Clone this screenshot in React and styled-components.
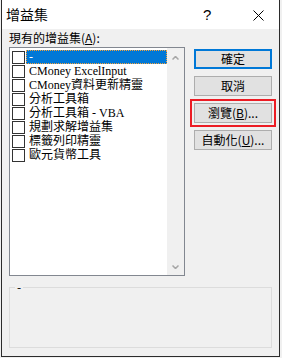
import React, { useState } from 'react';
import styled, { createGlobalStyle } from 'styled-components';

const GlobalStyle = createGlobalStyle`
    html, body {
        margin: 0;
        padding: 0;
        background: #f0f0f0;
    }
    body {
        font-family: "Noto Sans CJK TC", "Liberation Sans", sans-serif;
        font-size: 12px;
        color: #000;
    }
`;

const Window = styled.div`
    margin-left: 1px;
    width: 279px;
    height: 357px;
    box-sizing: border-box;
    border: 1px solid #2b2b2b;
    border-top: none;
    background: #f0f0f0;
    display: flex;
    flex-direction: column;
`;

const TitleBar = styled.div`
    height: 29px;
    background: #fff;
    display: flex;
    align-items: center;
    padding-left: 4px;
    .title {
        flex: 1;
        font-size: 14px;
        line-height: 14px;
        margin-top: -1px;
    }
    .help {
        width: 20px;
        font-family: "Liberation Sans", sans-serif;
        font-size: 15px;
        margin-right: 30px;
        margin-top: -1px;
    }
    .close {
        width: 11px;
        height: 11px;
        margin-right: 15px;
        margin-top: 1px;
    }
`;

const Body = styled.div`
    flex: 1;
    padding: 0 7px;
    display: flex;
    flex-direction: column;
`;

const TopRow = styled.div`
    display: flex;
    gap: 9px;
`;

const LeftCol = styled.div`
    width: 176px;
    display: flex;
    flex-direction: column;
`;

const Label = styled.div`
    height: 14px;
    line-height: 14px;
    margin-top: 2px;
    margin-bottom: 2px;
    u { text-decoration-thickness: 1px; }
`;

const ListBox = styled.div`
    height: 229px;
    box-sizing: border-box;
    border: 1px solid #828790;
    background: #fff;
    display: flex;
`;

const Items = styled.ul`
    flex: 1;
    list-style: none;
    margin: 0;
    padding: 2px 0 0 2px;
`;

const Row = styled.li`
    height: 14px;
    display: flex;
    align-items: center;
    gap: 1px;
`;

const Check = styled.span`
    width: 13px;
    height: 13px;
    box-sizing: border-box;
    border: 1px solid #333;
    background: #fff;
    flex: none;
`;

const ItemText = styled.span`
    flex: 1;
    height: 14px;
    box-sizing: border-box;
    padding-left: 2px;
    line-height: 13px;
    white-space: nowrap;
    font-family: "Liberation Serif", "Noto Sans CJK TC", serif;
    font-size: 12px;
    background: ${p => (p.$selected ? '#0078d7' : 'transparent')};
    color: ${p => (p.$selected ? '#fff' : '#000')};
    border: 1px dotted ${p => (p.$selected ? '#f7a33a' : 'transparent')};
`;

const ScrollBar = styled.div`
    width: 17px;
    background: #f0f0f0;
    display: flex;
    flex-direction: column;
    justify-content: space-between;
    align-items: center;
    padding: 8px 0 6px;
    svg { display: block; }
`;

const ButtonCol = styled.div`
    width: 78px;
    padding-top: 20px;
    display: flex;
    flex-direction: column;
    gap: 7px;
`;

const Button = styled.button`
    height: 20px;
    padding: 0;
    box-sizing: border-box;
    background: #e1e1e1;
    border: ${p => (p.$default ? '2px solid #0078d7' : '1px solid #adadad')};
    font-family: "Noto Sans CJK TC", "Liberation Sans", sans-serif;
    font-size: 12px;
    line-height: 14px;
    color: #000;
    outline: ${p => (p.$marked ? '2px solid #ec1c24' : 'none')};
    outline-offset: 2px;
    u { text-decoration-thickness: 1px; }
`;

const Group = styled.fieldset`
    margin: 8px 0 0;
    height: 64px;
    box-sizing: border-box;
    border: 1px solid #dcdcdc;
    padding: 0;
    legend {
        margin-left: 5px;
        padding: 0 2px;
        font-size: 12px;
        line-height: 6px;
    }
`;

const addins = [
    '-',
    'CMoney ExcelInput',
    'CMoney資料更新精靈',
    '分析工具箱',
    '分析工具箱 - VBA',
    '規劃求解增益集',
    '標籤列印精靈',
    '歐元貨幣工具',
];

export default function App() {
    const [selected] = useState(0);

    return (
        <>
            <GlobalStyle />
            <Window>
                <TitleBar>
                    <span className="title">增益集</span>
                    <span className="help">?</span>
                    <svg className="close" viewBox="0 0 11 11">
                        <path d="M0.5 0.5 L10.5 10.5 M10.5 0.5 L0.5 10.5" stroke="#000" strokeWidth="1" />
                    </svg>
                </TitleBar>
                <Body>
                    <TopRow>
                        <LeftCol>
                            <Label>現有的增益集(<u>A</u>):</Label>
                            <ListBox>
                                <Items>
                                    {addins.map((a, i) => (
                                        <Row key={a}>
                                            <Check />
                                            <ItemText $selected={i === selected}>{a}</ItemText>
                                        </Row>
                                    ))}
                                </Items>
                                <ScrollBar>
                                    <svg width="7" height="4" viewBox="0 0 7 4">
                                        <path d="M0.5 3.5 L3.5 0.5 L6.5 3.5" fill="none" stroke="#a6a6a6" strokeWidth="1.5" />
                                    </svg>
                                    <svg width="7" height="4" viewBox="0 0 7 4">
                                        <path d="M0.5 0.5 L3.5 3.5 L6.5 0.5" fill="none" stroke="#a6a6a6" strokeWidth="1.5" />
                                    </svg>
                                </ScrollBar>
                            </ListBox>
                        </LeftCol>
                        <ButtonCol>
                            <Button $default>確定</Button>
                            <Button>取消</Button>
                            <Button $marked>瀏覽(<u>B</u>)...</Button>
                            <Button>自動化(<u>U</u>)...</Button>
                        </ButtonCol>
                    </TopRow>
                    <Group>
                        <legend>-</legend>
                    </Group>
                </Body>
            </Window>
        </>
    );
}
